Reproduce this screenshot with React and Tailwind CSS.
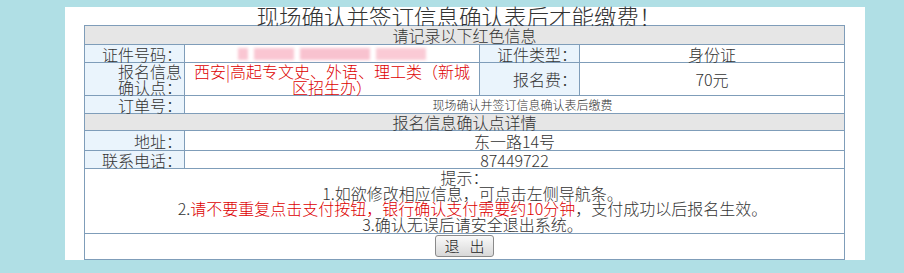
export default function App() {
  const label = "bg-[#eaf4fc] border-r border-b border-[#7f9db9] flex items-center justify-end text-right pr-[2px]";
  const cell = "border-r border-b border-[#7f9db9] flex items-center justify-center text-center";
  return (
    <div
      className="w-[904px] h-[273px] bg-[#b0dfe5] pt-[7px] text-[#333] text-[16px] leading-[16px] font-light"
      style={{ fontFamily: '"Noto Sans CJK SC", "Noto Sans", sans-serif' }}
    >
      <div className="ml-[65px] w-[800px] h-[253px] bg-white">
        {/* title */}
        <div className="h-[18px] leading-[18px] text-[22.5px] text-center whitespace-nowrap pr-[12px]">
          现场确认并签订信息确认表后才能缴费！
        </div>

        <div className="ml-[19px] w-[761px] grid grid-cols-[100px_295px_100px_265px] border-l border-t border-[#7f9db9]">
          <div className={`${cell} col-span-4 h-[19px] bg-[#e6e6e6]`}>请记录以下红色信息</div>

          <div className={`${label} h-[18px]`}>证件号码：</div>
          <div className={`${cell} h-[18px]`}>
            <span className="flex gap-[6px] opacity-60 blur-[1.5px]">
              <span className="w-[10px] h-[12px] bg-[#f7a1b5]" />
              <span className="w-[40px] h-[12px] bg-[#f7a1b5]" />
              <span className="w-[70px] h-[12px] bg-[#f59ab0]" />
              <span className="w-[50px] h-[12px] bg-[#f7a8ba]" />
            </span>
          </div>
          <div className={`${label} h-[18px]`}>证件类型：</div>
          <div className={`${cell} h-[18px]`}>身份证</div>

          <div className={`${label} h-[33px]`}>
            报名信息
            <br />
            确认点：
          </div>
          <div className={`${cell} h-[33px] text-[#dd0000] whitespace-nowrap`}>
            西安|高起专文史、外语、理工类（新城
            <br />
            区招生办）
          </div>
          <div className={`${label} h-[33px]`}>报名费：</div>
          <div className={`${cell} h-[33px]`}>70元</div>

          <div className={`${label} h-[18px]`}>订单号：</div>
          <div className={`${cell} col-span-3 h-[18px] text-[12px] pl-4`}>现场确认并签订信息确认表后缴费</div>

          <div className={`${cell} col-span-4 h-[17px] bg-[#e6e6e6]`}>报名信息确认点详情</div>

          <div className={`${label} h-[20px]`}>地址：</div>
          <div className={`${cell} col-span-3 h-[20px]`}>东一路14号</div>

          <div className={`${label} h-[18px]`}>联系电话：</div>
          <div className={`${cell} col-span-3 h-[18px]`}>87449722</div>

          <div className={`${cell} col-span-4 h-[65px] flex-col leading-[15.5px] whitespace-nowrap`}>
            <div>提示：</div>
            <div className="pl-4">1.如欲修改相应信息，可点击左侧导航条。</div>
            <div className="pl-4">
              2.<span className="text-[#dd0000]">请不要重复点击支付按钮，银行确认支付需要约10分钟</span>，支付成功以后报名生效。
            </div>
            <div className="pl-4">3.确认无误后请安全退出系统。</div>
          </div>

          <div className={`${cell} col-span-4 h-[26px] items-start pt-[1px]`}>
            <button className="w-[59px] h-[22px] rounded-[3px] border border-[#8a8a8a] bg-gradient-to-b from-[#fafafa] to-[#d8d8d8] text-[15px] leading-[20px] text-[#222] whitespace-nowrap">
              退&nbsp;&nbsp;&nbsp;出
            </button>
          </div>
        </div>
      </div>
    </div>
  );
}
